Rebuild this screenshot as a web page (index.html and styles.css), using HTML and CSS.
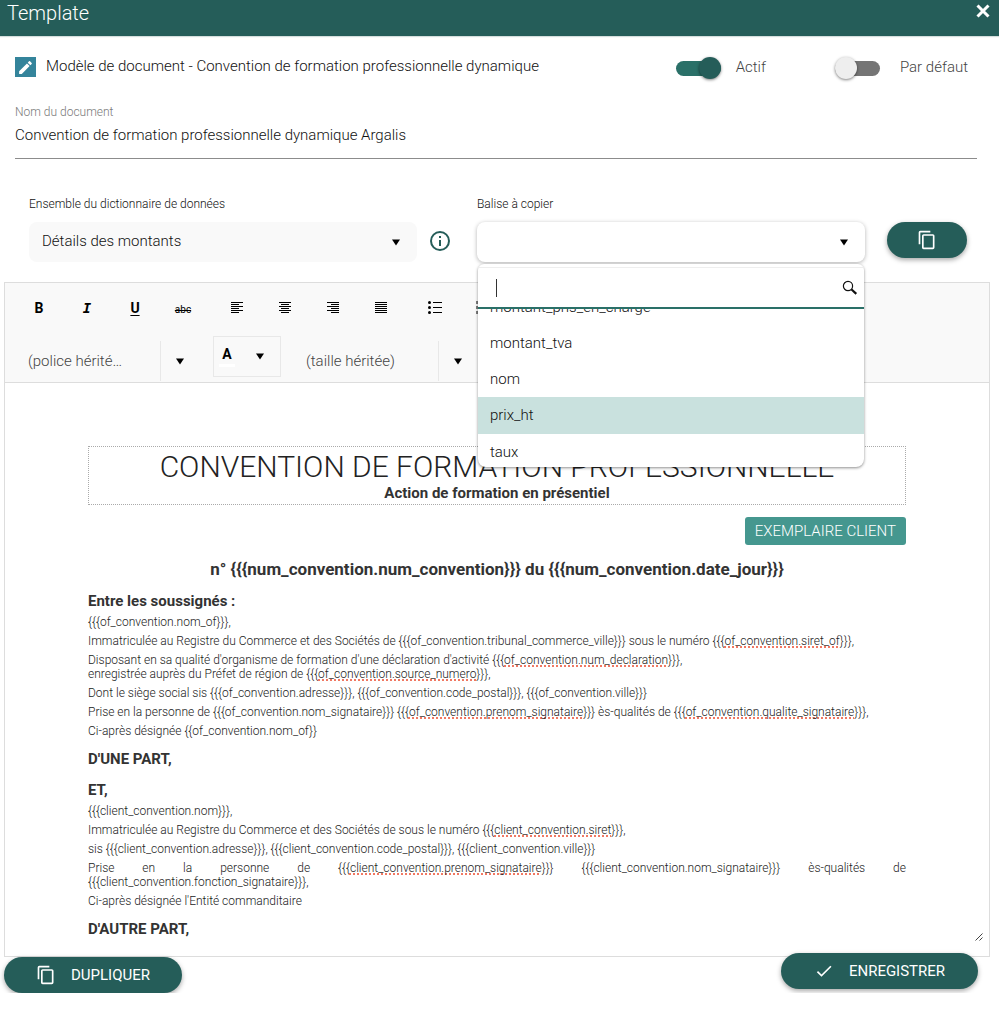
FILE: index.html
```html
<!DOCTYPE html>
<html lang="fr">
<head>
<meta charset="utf-8">
<title>Template</title>
<link rel="stylesheet" href="styles.css">
</head>
<body>
<header class="topbar">
  <h1 class="topbar-title">Template</h1>
  <button class="close" aria-label="Fermer"><svg width="14" height="14" viewBox="0 0 14 14"><path d="M1.5 1.5l11 11M12.5 1.5l-11 11" stroke="#fff" stroke-width="3" fill="none"/></svg></button>
</header>

<section class="heading">
  <span class="edit-icon"><svg width="17" height="17" viewBox="0 0 24 24"><path fill="#fff" d="M3 17.25V21h3.75L17.81 9.94l-3.75-3.75zM20.71 7.04a1 1 0 0 0 0-1.41l-2.34-2.34a1 1 0 0 0-1.41 0l-1.83 1.83 3.75 3.75z"/></svg></span>
  <h2 class="heading-title">Modèle de document - Convention de formation professionnelle dynamique</h2>
  <div class="switches">
    <label class="switch"><input type="checkbox" role="switch" checked><span>Actif</span></label>
    <label class="switch switch-default"><input type="checkbox" role="switch"><span>Par défaut</span></label>
  </div>
</section>

<div class="name-field">
  <label for="doc-name">Nom du document</label>
  <input id="doc-name" type="text" value="Convention de formation professionnelle dynamique Argalis">
</div>

<section class="tags">
  <div class="field">
    <label for="dictionary">Ensemble du dictionnaire de données</label>
    <div class="select-box">
      <select id="dictionary"><option>Détails des montants</option></select>
      <svg class="arrow" width="8" height="7" viewBox="0 0 8 7"><path d="M0 .5h8L4 6.5z"/></svg>
    </div>
  </div>
  <button class="info" aria-label="Informations"><svg width="24" height="24" viewBox="0 0 24 24"><path fill="#255d59" d="M11 7h2v2h-2zm0 4h2v6h-2zm1-9a10 10 0 1 0 0 20 10 10 0 0 0 0-20zm0 18a8 8 0 1 1 0-16 8 8 0 0 1 0 16z"/></svg></button>
  <div class="field">
    <label for="tag">Balise à copier</label>
    <div class="select-box open">
      <select id="tag"><option></option></select>
      <svg class="arrow" width="8" height="7" viewBox="0 0 8 7"><path d="M0 .5h8L4 6.5z"/></svg>
      <div class="popup">
        <div class="search">
          <span class="caret"></span>
          <input type="text" aria-label="Rechercher une balise">
          <svg width="16" height="16" viewBox="0 0 16 16"><circle cx="6" cy="6" r="4.600" fill="none" stroke="#111" stroke-width="1.200"/><path d="M9.300 9.300l5 4.600" stroke="#111" stroke-width="2.200"/></svg>
        </div>
        <ul class="options" role="listbox" aria-label="Balises">
          <li role="option">montant_pris_en_charge</li>
          <li role="option">montant_tva</li>
          <li role="option">nom</li>
          <li role="option" class="active" aria-selected="true">prix_ht</li>
          <li role="option">taux</li>
        </ul>
      </div>
    </div>
  </div>
  <button class="pill copy" aria-label="Copier la balise"><svg width="20" height="20" viewBox="0 0 24 24"><path fill="#fff" d="M16 1H4a2 2 0 0 0-2 2v14h2V3h12zm3 4H8a2 2 0 0 0-2 2v14c0 1.100.9 2 2 2h11a2 2 0 0 0 2-2V7a2 2 0 0 0-2-2zm0 16H8V7h11z"/></svg></button>
</section>

<section class="editor">
  <div class="toolbar">
    <div class="tools">
      <div class="group">
        <button class="tool bold" aria-label="Gras">B</button>
        <button class="tool italic" aria-label="Italique">I</button>
        <button class="tool underline" aria-label="Souligné">U</button>
        <button class="tool strike" aria-label="Barré">abc</button>
      </div>
      <div class="group">
        <button class="tool" aria-label="Aligner à gauche"><svg width="14" height="12" viewBox="0 0 14 12"><path d="M1 .5h12M1 2.500h8M1 4.500h12M1 6.500h8M1 8.500h12M1 10.500h8" stroke="#000"/></svg></button>
        <button class="tool" aria-label="Centrer"><svg width="14" height="12" viewBox="0 0 14 12"><path d="M1 .5h12M3 2.500h8M1 4.500h12M3 6.500h8M1 8.500h12M3 10.500h8" stroke="#000"/></svg></button>
        <button class="tool" aria-label="Aligner à droite"><svg width="14" height="12" viewBox="0 0 14 12"><path d="M1 .5h12M5 2.500h8M1 4.500h12M5 6.500h8M1 8.500h12M5 10.500h8" stroke="#000"/></svg></button>
        <button class="tool" aria-label="Justifier"><svg width="14" height="12" viewBox="0 0 14 12"><path d="M1 .5h12M1 2.500h12M1 4.500h12M1 6.500h12M1 8.500h12M1 10.500h12" stroke="#000"/></svg></button>
      </div>
      <div class="group">
        <button class="tool" aria-label="Liste à puces"><svg width="14" height="14" viewBox="0 0 14 14"><path d="M5 1.500h9M5 6.500h9M5 11.500h9" stroke="#000"/><circle cx="1.500" cy="1.500" r="1.500"/><circle cx="1.500" cy="6.500" r="1.500"/><circle cx="1.500" cy="11.500" r="1.500"/></svg></button>
        <button class="tool" aria-label="Liste numérotée"><svg width="14" height="14" viewBox="0 0 14 14"><path d="M5 1.500h9M5 6.500h9M5 11.500h9M1 0v3M1 5v3M1 10v3" stroke="#000"/></svg></button>
      </div>
    </div>
    <div class="tools">
      <div class="combo">
        <select aria-label="Police"><option>(police hérité…</option></select>
        <svg class="arrow" width="8" height="7" viewBox="0 0 8 7"><path d="M0 .5h8L4 6.500z"/></svg>
      </div>
      <button class="color" aria-label="Couleur du texte"><span class="letter">A</span><svg width="8" height="7" viewBox="0 0 8 7"><path d="M0 .5h8L4 6.500z"/></svg></button>
      <div class="combo">
        <select aria-label="Taille"><option>(taille héritée)</option></select>
        <svg class="arrow" width="8" height="7" viewBox="0 0 8 7"><path d="M0 .5h8L4 6.500z"/></svg>
      </div>
    </div>
  </div>
  <article class="document">
    <div class="title-box">
      <p class="doc-title">CONVENTION DE FORMATION PROFESSIONNELLE</p>
      <p class="doc-subtitle">Action de formation en présentiel</p>
    </div>
    <div class="copy-row"><span class="badge">EXEMPLAIRE CLIENT</span></div>
    <p class="number">n° {{{num_convention.num_convention}}} du {{{num_convention.date_jour}}}</p>
    <h3>Entre les soussignés :</h3>
    <p>{{{of_convention.nom_of}}},</p>
    <p>Immatriculée au Registre du Commerce et des Sociétés de {{{of_convention.tribunal_commerce_ville}}} sous le numéro {{{<u>of_convention.siret_of</u>}}},</p>
    <p>Disposant en sa qualité d'organisme de formation d'une déclaration d'activité {{{<u>of_convention.num_declaration</u>}}},<br>enregistrée auprès du Préfet de région de {{{<u>of_convention.source_numero</u>}}},</p>
    <p>Dont le siège social sis {{{of_convention.adresse}}}, {{{of_convention.code_postal}}}, {{{of_convention.ville}}}</p>
    <p>Prise en la personne de {{{of_convention.nom_signataire}}} {{{<u>of_convention.prenom_signataire</u>}}} ès-qualités de {{{<u>of_convention.qualite_signataire</u>}}},</p>
    <p>Ci-après désignée {{of_convention.nom_of}}</p>
    <h3>D'UNE PART,</h3>
    <h3>ET,</h3>
    <p>{{{client_convention.nom}}},</p>
    <p>Immatriculée au Registre du Commerce et des Sociétés de sous le numéro {{{<u>client_convention.siret</u>}}},</p>
    <p>sis {{{client_convention.adresse}}}, {{{client_convention.code_postal}}}, {{{client_convention.ville}}}</p>
    <p>Prise en la personne de {{{<u>client_convention.prenom_signataire</u>}}} {{{client_convention.nom_signataire}}} ès-qualités de {{{client_convention.fonction_signataire}}},</p>
    <p>Ci-après désignée l'Entité commanditaire</p>
    <h3>D'AUTRE PART,</h3>
    <svg class="grip" width="8" height="8" viewBox="0 0 8 8"><path d="M.5 7.500l7-7M4.500 7.500l3-3" stroke="#444" fill="none"/></svg>
  </article>
</section>

<footer class="actions">
  <button class="pill duplicate"><svg width="20" height="20" viewBox="0 0 24 24"><path fill="#fff" d="M16 1H4a2 2 0 0 0-2 2v14h2V3h12zm3 4H8a2 2 0 0 0-2 2v14c0 1.100.9 2 2 2h11a2 2 0 0 0 2-2V7a2 2 0 0 0-2-2zm0 16H8V7h11z"/></svg><span>DUPLIQUER</span></button>
  <button class="pill save"><svg width="20" height="20" viewBox="0 0 24 24"><path fill="#fff" d="M9 16.170L4.830 12l-1.420 1.410L9 19 21 7l-1.410-1.410z"/></svg><span>ENREGISTRER</span></button>
</footer>
</body>
</html>
```
FILE: styles.css
```css
* { box-sizing: border-box; }

body {
  margin: 0;
  background: #fff;
  color: #111;
  font-family: Roboto, "Liberation Sans", sans-serif;
  font-size: 15px;
  font-weight: 300;
}

h1, h2, h3, p, ul { margin: 0; padding: 0; }

button, input, select {
  margin: 0;
  padding: 0;
  border: 0;
  background: none;
  color: inherit;
  font: inherit;
  outline: 0;
}

select { appearance: none; width: 100%; height: 100%; }

svg { display: block; flex: none; }

.topbar {
  display: flex;
  justify-content: space-between;
  align-items: flex-start;
  height: 36px;
  padding: 0 9px 0 7px;
  background: #255d59;
  color: #fff;
  box-shadow: 0 1px 1px #d5dedd;
}

.topbar-title { font-size: 20px; font-weight: 300; line-height: 26px; }

.close { padding-top: 4px; }

.heading {
  display: flex;
  align-items: center;
  height: 62px;
  padding: 0 31px 0 15px;
}

.edit-icon {
  display: grid;
  place-items: center;
  width: 21px;
  height: 20px;
  margin-right: 10px;
  background: #34849b;
}

.heading-title {
  flex: 1;
  padding-bottom: 2px;
  font-size: 15px;
  font-weight: 300;
  line-height: 20px;
}

.switches { display: flex; gap: 69px; color: #444; }

.switch { display: flex; align-items: center; gap: 15px; }
.switch-default { gap: 20px; }

.switch input {
  appearance: none;
  display: grid;
  grid-template-rows: 15px;
  align-items: center;
  justify-content: start;
  width: 45px;
  height: 15px;
  margin-top: 2px;
  border-radius: 8px;
  background: #757575;
}

.switch input::before {
  content: "";
  width: 22px;
  height: 22px;
  border-radius: 50%;
  background: #eee;
  box-shadow: 0 1px 3px rgba(0, 0, 0, .5);
}

.switch input:checked { justify-content: end; background: #2a7068; }
.switch input:checked::before { background: #255d59; }

.name-field {
  display: flex;
  flex-direction: column;
  margin: 6px 22px 0 15px;
  border-bottom: 1px solid #8c8c8c;
}

.name-field label { color: #7a7a7a; font-size: 12px; line-height: 16px; }
.name-field input { height: 30px; margin-bottom: 8px; }

.tags {
  display: grid;
  grid-template-columns: 1fr 60px 1fr 102px;
  align-items: end;
  padding: 37px 32px 20px 29px;
}

.field label { display: block; margin-bottom: 10px; font-size: 12px; line-height: 16px; }

.select-box {
  position: relative;
  height: 40px;
  border-radius: 8px;
  background: #f9f9f9;
}

.select-box select { padding: 0 32px 2px 13px; }

.arrow {
  position: absolute;
  top: 50%;
  right: 17px;
  margin-top: -3px;
  pointer-events: none;
}

.open { background: #fff; box-shadow: 0 1px 4px rgba(0, 0, 0, .3); }

.popup {
  position: absolute;
  z-index: 2;
  top: 42px;
  left: 1px;
  right: 1px;
  overflow: hidden;
  border-radius: 6px 6px 8px 8px;
  background: #fff;
  box-shadow: 0 1px 3px rgba(0, 0, 0, .45);
}

.search {
  display: flex;
  align-items: center;
  height: 42px;
  margin-top: 3px;
  padding: 0 6px 0 18px;
  border-top: 1px solid #eee;
  border-bottom: 2px solid #2a7068;
}

.search input { flex: 1; min-width: 0; }

.caret { width: 1px; height: 18px; background: #333; }

.options { height: 158px; overflow: hidden; list-style: none; }
.options li { height: 36px; padding-left: 12px; line-height: 36px; }
.options li:first-child { margin-top: -20px; }
.options .active { height: 37px; background: #c9e1de; }

.info { width: 24px; margin: 0 25px 9px 11px; }

.pill {
  display: flex;
  align-items: center;
  justify-content: center;
  height: 36px;
  border-radius: 18px;
  background: #255d59;
  color: #fff;
  font-weight: 400;
  box-shadow: 0 2px 5px rgba(0, 0, 0, .35);
}

.copy { justify-self: end; width: 80px; margin-bottom: 4px; }

.editor { margin: 0 9px 0 4px; border: 1px solid #ddd; }

.toolbar {
  display: flex;
  flex-direction: column;
  height: 100px;
  padding: 7px 10px 0;
  border-bottom: 1px solid #ddd;
  background: #f9f9f9;
}

.tools { display: flex; }
.tools:first-child { gap: 6px; }
.tools:last-child { gap: 12px; margin-top: 10px; }
.group { display: flex; }

.tool {
  display: grid;
  place-items: center;
  width: 48px;
  height: 36px;
  color: #000;
  font-size: 14px;
  font-weight: 700;
}

.italic { font-family: "DejaVu Sans Mono", monospace; font-style: italic; }
.underline { text-decoration: underline; text-underline-offset: 2px; }
.strike { padding-top: 2px; font-size: 10px; font-weight: 400; text-decoration: line-through; }

.combo { position: relative; width: 186px; height: 40px; margin-top: 5px; color: #444; }
.combo select {
  width: 146px;
  padding-left: 13px;
  border-right: 1px solid #e8e8e8;
}
.combo .arrow { fill: #000; }

.color {
  display: flex;
  align-items: center;
  justify-content: space-between;
  width: 68px;
  height: 41px;
  padding: 0 16px 0 5px;
  border: 1px solid #e8e8e8;
  color: #000;
}

.letter {
  width: 16px;
  margin-bottom: 3px;
  border-bottom: 3px solid #fff;
  font-size: 14px;
  font-weight: 700;
  line-height: 20px;
}

.document {
  position: relative;
  padding: 63px 83px 13px;
  color: #222;
  font-size: 12px;
  line-height: 14px;
  text-align: justify;
}

.document p { margin-bottom: 5px; }

.document h3 {
  margin: 12px 0 5px;
  color: #333;
  font-size: 15px;
  font-weight: 700;
  line-height: 18px;
}

.document h3 + h3 { margin-top: 13px; }

.document u {
  text-decoration: underline dotted #f07862 2px;
  text-decoration-skip-ink: none;
}

.title-box { border: 1px dotted #aaa; text-align: center; }
.document .doc-title { margin: 2px 0 0; font-size: 30px; line-height: 35px; }
.document .doc-subtitle {
  margin: 0 0 2px;
  color: #333;
  font-size: 15px;
  font-weight: 700;
  line-height: 18px;
}

.copy-row { display: flex; justify-content: flex-end; margin: 12px 0 14px; }

.badge {
  padding: 0 10px;
  border-radius: 3px;
  background: #45978f;
  color: #fff;
  font-size: 15px;
  line-height: 28px;
}

.document .number {
  margin-bottom: 13px;
  color: #333;
  font-size: 17px;
  font-weight: 700;
  line-height: 20px;
  text-align: center;
}

.grip { position: absolute; right: 6px; bottom: 15px; }

.actions {
  position: relative;
  display: flex;
  justify-content: space-between;
  align-items: flex-end;
  height: 40px;
  margin: -4px 21px 0 4px;
}

.duplicate { width: 178px; gap: 15px; }
.save { width: 197px; gap: 15px; align-self: flex-start; }
```
